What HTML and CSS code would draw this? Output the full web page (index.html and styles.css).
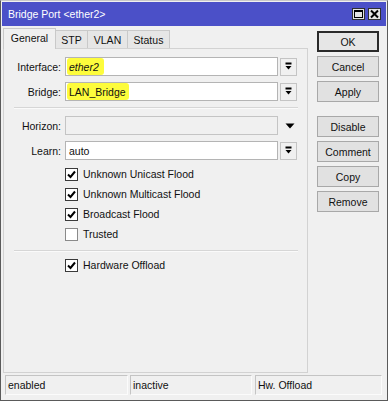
FILE: index.html
```html
<!DOCTYPE html>
<html>
<head>
<meta charset="utf-8">
<link rel="stylesheet" href="styles.css">
</head>
<body>
<div class="window">
  <div class="titlebar">
    <span class="title">Bridge Port &lt;ether2&gt;</span>
    <div class="tb-btns">
      <span class="tb-btn"><svg width="11" height="10" viewBox="0 0 11 10"><rect x="1.5" y="1.5" width="8" height="7" fill="none" stroke="#000" stroke-width="1"/><rect x="1" y="1" width="9" height="2" fill="#000"/></svg></span>
      <span class="tb-btn"><svg width="11" height="10" viewBox="0 0 11 10"><path d="M2 1.5 L9 8.5 M9 1.5 L2 8.5" stroke="#000" stroke-width="2"/></svg></span>
    </div>
  </div>
  <div class="main">
    <div class="left">
      <div class="tabs">
        <div class="tab active">General</div>
        <div class="tab">STP</div>
        <div class="tab">VLAN</div>
        <div class="tab">Status</div>
      </div>
      <div class="panel">
        <div class="row">
          <span class="lbl">Interface:</span>
          <div class="field"><span class="hl it">ether2</span></div>
          <span class="ddbtn"><svg width="9" height="9" viewBox="0 0 9 9"><rect x="1.5" y="0.5" width="6" height="2" fill="#000"/><polygon points="1.5,4 7.5,4 4.5,7.5" fill="#000"/></svg></span>
        </div>
        <div class="row">
          <span class="lbl">Bridge:</span>
          <div class="field"><span class="hl">LAN_Bridge</span></div>
          <span class="ddbtn"><svg width="9" height="9" viewBox="0 0 9 9"><rect x="1.5" y="0.5" width="6" height="2" fill="#000"/><polygon points="1.5,4 7.5,4 4.5,7.5" fill="#000"/></svg></span>
        </div>
        <div class="sep sep1"></div>
        <div class="row">
          <span class="lbl">Horizon:</span>
          <div class="field disabled"></div>
          <span class="ddplain"><svg width="10" height="6" viewBox="0 0 10 6"><polygon points="0.5,0.5 9.5,0.5 5,5.5" fill="#000"/></svg></span>
        </div>
        <div class="row">
          <span class="lbl">Learn:</span>
          <div class="field"><span class="val">auto</span></div>
          <span class="ddbtn"><svg width="9" height="9" viewBox="0 0 9 9"><rect x="1.5" y="0.5" width="6" height="2" fill="#000"/><polygon points="1.5,4 7.5,4 4.5,7.5" fill="#000"/></svg></span>
        </div>
        <div class="checks">
          <div class="chk"><span class="box on"><svg width="11" height="11" viewBox="0 0 11 11"><path d="M2 5.5 L4.5 8 L9 2.5" fill="none" stroke="#000" stroke-width="2"/></svg></span>Unknown Unicast Flood</div>
          <div class="chk"><span class="box on"><svg width="11" height="11" viewBox="0 0 11 11"><path d="M2 5.5 L4.5 8 L9 2.5" fill="none" stroke="#000" stroke-width="2"/></svg></span>Unknown Multicast Flood</div>
          <div class="chk"><span class="box on"><svg width="11" height="11" viewBox="0 0 11 11"><path d="M2 5.5 L4.5 8 L9 2.5" fill="none" stroke="#000" stroke-width="2"/></svg></span>Broadcast Flood</div>
          <div class="chk"><span class="box off"></span>Trusted</div>
        </div>
        <div class="sep sep2"></div>
        <div class="checks">
          <div class="chk"><span class="box on"><svg width="11" height="11" viewBox="0 0 11 11"><path d="M2 5.5 L4.5 8 L9 2.5" fill="none" stroke="#000" stroke-width="2"/></svg></span>Hardware Offload</div>
        </div>
      </div>
    </div>
    <div class="buttons">
      <div class="btn default">OK</div>
      <div class="btn">Cancel</div>
      <div class="btn">Apply</div>
      <div class="btn gap">Disable</div>
      <div class="btn">Comment</div>
      <div class="btn">Copy</div>
      <div class="btn">Remove</div>
    </div>
  </div>
  <div class="status">
    <div class="seg s1">enabled</div>
    <div class="seg s2">inactive</div>
    <div class="seg s3">Hw. Offload</div>
  </div>
</div>
</body>
</html>
```

FILE: styles.css
```css
html, body {
  margin: 0;
  padding: 0;
  background: #f0f0f0;
}
body {
  font-family: "Liberation Sans", Arial, sans-serif;
  font-size: 10.5px;
  color: #111;
}
.window {
  box-sizing: border-box;
  width: 388px;
  height: 401px;
  border: 1px solid #5a5a5a;
  border-top-color: #c8c8c8;
  padding: 1px;
  background: #f0f0f0;
  display: flex;
  flex-direction: column;
}
.titlebar {
  height: 24px;
  background: #4b50c8;
  display: flex;
  align-items: center;
  justify-content: space-between;
  padding: 0 5px 0 6px;
  flex: none;
}
.title {
  color: #fff;
  font-size: 10.5px;
}
.tb-btns {
  display: flex;
  gap: 3px;
}
.tb-btn {
  box-sizing: border-box;
  width: 13px;
  height: 12px;
  background: #e4e4e4;
  border: 1px solid #303030;
  display: flex;
  align-items: center;
  justify-content: center;
}
.tb-btn svg { display: block; }
.main {
  display: flex;
  height: 349px;
  padding: 2px 0 0 1px;
  box-sizing: border-box;
  flex: none;
}
.left {
  width: 305px;
  display: flex;
  flex-direction: column;
}
.tabs {
  display: flex;
  align-items: flex-end;
  height: 20px;
  position: relative;
  z-index: 1;
}
.tab {
  box-sizing: border-box;
  height: 18px;
  border: 1px solid #c9c9c9;
  border-bottom: none;
  background: #e6e6e6;
  display: flex;
  align-items: center;
  justify-content: center;
  margin-left: -1px;
}
.tab:nth-child(2) { width: 33px; }
.tab:nth-child(3) { width: 41px; }
.tab:nth-child(4) { width: 43px; }
.tab.active {
  width: 53px;
  height: 21px;
  margin-left: 0;
  margin-bottom: -1px;
  background: #f0f0f0;
  padding-bottom: 2px;
}
.panel {
  box-sizing: border-box;
  height: 325px;
  border: 1px solid #d2d2d2;
  padding-top: 8px;
}
.row {
  display: flex;
  align-items: center;
  height: 19px;
  margin-bottom: 6px;
}
.lbl {
  width: 57px;
  text-align: right;
  margin-right: 4px;
  flex: none;
}
.field {
  box-sizing: border-box;
  width: 213px;
  height: 19px;
  background: #fff;
  border: 1px solid #b4b4b4;
  display: flex;
  align-items: stretch;
  padding: 0 1px;
}
.field.disabled {
  background: #f0f0f0;
  border-color: #c4c4c4;
}
.val {
  display: flex;
  align-items: center;
  padding-left: 2px;
}
.hl {
  display: flex;
  align-items: center;
  background: #fdfc3c;
  border-radius: 3px;
  padding: 0 3px 0 2px;
}
.it {
  font-style: italic;
  padding-right: 5px;
}
.ddbtn {
  box-sizing: border-box;
  width: 17px;
  height: 18px;
  margin-left: 2px;
  border: 1px solid #c4c4c4;
  background: #f0f0f0;
  display: flex;
  align-items: center;
  justify-content: center;
}
.ddbtn svg, .ddplain svg { display: block; }
.ddplain {
  width: 17px;
  margin-left: 3px;
  display: flex;
  justify-content: center;
}
.sep {
  height: 1px;
  background: #d6d6d6;
  border-bottom: 1px solid #fafafa;
  margin-left: 10px;
  width: 284px;
}
.sep1 { margin-top: 2px; margin-bottom: 7px; }
.checks {
  padding-left: 61px;
}
.row + .checks { margin-top: -2px; }
.chk {
  height: 20px;
  display: flex;
  align-items: center;
}
.box {
  box-sizing: border-box;
  width: 13px;
  height: 13px;
  background: #fff;
  border: 1px solid #3a3a3a;
  margin-right: 5px;
  display: flex;
  align-items: center;
  justify-content: center;
}
.box.off { border-color: #8a8a8a; }
.box svg { display: block; }
.sep2 { margin-top: 6px; margin-bottom: 3px; }
.buttons {
  margin-left: 9px;
  width: 62px;
  padding-top: 3px;
  display: flex;
  flex-direction: column;
  gap: 4px;
}
.btn {
  box-sizing: border-box;
  height: 21px;
  background: #e1e1e1;
  border: 1px solid #a8a8a8;
  display: flex;
  align-items: center;
  justify-content: center;
}
.btn.default {
  border: 2px solid #2a2a2a;
  background: #e6e6e6;
}
.btn.gap { margin-top: 10px; }
.status {
  display: flex;
  height: 20px;
  padding-left: 3px;
  flex: none;
}
.seg {
  box-sizing: border-box;
  height: 20px;
  border: 1px solid #c4c4c4;
  border-right-color: #fbfbfb;
  border-bottom-color: #fbfbfb;
  display: flex;
  align-items: center;
  padding-left: 2px;
}
.s1 { width: 123px; margin-right: 2px; }
.s2 { width: 122px; margin-right: 3px; }
.s3 { width: 127px; }
```
